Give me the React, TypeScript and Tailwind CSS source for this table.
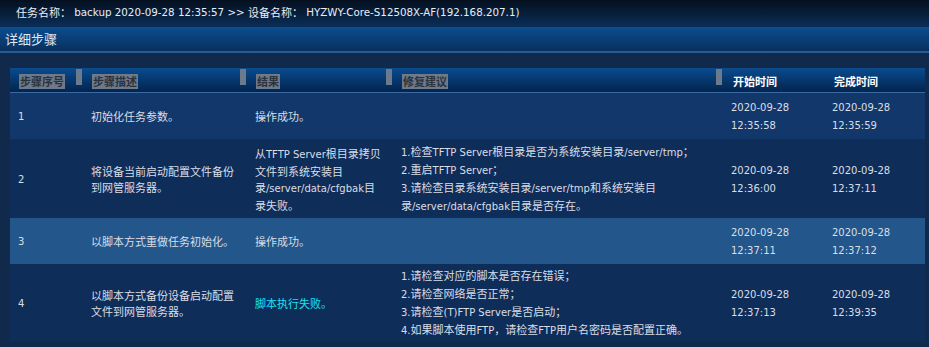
const COLS = 'grid grid-cols-[73px_164px_146px_330px_101px_101px]'

const HEADS = ['步骤序号', '步骤描述', '结果', '修复建议']

type Row = {
  no: string
  desc: string[]
  result: string[]
  fail?: boolean
  advice: string[]
  start: string[]
  end: string[]
  h: string
  bg: string
}

const ROWS: Row[] = [
  {
    no: '1',
    desc: ['初始化任务参数。'],
    result: ['操作成功。'],
    advice: [],
    start: ['2020-09-28', '12:35:58'],
    end: ['2020-09-28', '12:35:59'],
    h: 'h-[46px]',
    bg: 'bg-[#12386b]',
  },
  {
    no: '2',
    desc: ['将设备当前启动配置文件备份', '到网管服务器。'],
    result: ['从TFTP Server根目录拷贝', '文件到系统安装目', '录/server/data/cfgbak目', '录失败。'],
    advice: [
      '1.检查TFTP Server根目录是否为系统安装目录/server/tmp；',
      '2.重启TFTP Server；',
      '3.请检查目录系统安装目录/server/tmp和系统安装目',
      '录/server/data/cfgbak目录是否存在。',
    ],
    start: ['2020-09-28', '12:36:00'],
    end: ['2020-09-28', '12:37:11'],
    h: 'h-[79px]',
    bg: 'bg-[#0f2d59]',
  },
  {
    no: '3',
    desc: ['以脚本方式重做任务初始化。'],
    result: ['操作成功。'],
    advice: [],
    start: ['2020-09-28', '12:37:11'],
    end: ['2020-09-28', '12:37:12'],
    h: 'h-[46px]',
    bg: 'bg-[#23568b]',
  },
  {
    no: '4',
    desc: ['以脚本方式备份设备启动配置', '文件到网管服务器。'],
    result: ['脚本执行失败。'],
    fail: true,
    advice: [
      '1.请检查对应的脚本是否存在错误；',
      '2.请检查网络是否正常；',
      '3.请检查(T)FTP Server是否启动；',
      '4.如果脚本使用FTP，请检查FTP用户名密码是否配置正确。',
    ],
    start: ['2020-09-28', '12:37:13'],
    end: ['2020-09-28', '12:39:35'],
    h: 'h-[77px]',
    bg: 'bg-[#0f2d59]',
  },
]

// latin runs are set a size smaller in a Verdana-like face, the way the old page renders them
function Txt({ s, top }: { s: string; top?: boolean }) {
  const parts = s.split(/([\x20-\x7e]+)/).filter(Boolean)
  return (
    <>
      {parts.map((p, i) =>
        /^[\x20-\x7e]+$/.test(p) ? (
          <span
            key={i}
            className={`font-['DejaVu_Sans',sans-serif] whitespace-pre ${top ? 'text-[10.3px]' : 'text-[10px]'}`}
          >
            {p}
          </span>
        ) : (
          <span key={i}>{p}</span>
        ),
      )}
    </>
  )
}

function Lines({ lines }: { lines: string[] }) {
  return (
    <div className="flex flex-col">
      {lines.map((l, i) => (
        <span key={i} className="whitespace-nowrap"><Txt s={l} /></span>
      ))}
    </div>
  )
}

export default function App() {
  return (
    <div className="w-[929px] h-[347px] overflow-hidden bg-[#11294b] text-[11px] leading-[16px] text-[#dadee5] font-['Noto_Sans_CJK_SC',sans-serif]">
      <div className="h-[27px] flex items-center pl-4 pb-[3px] bg-gradient-to-b from-[#04101f] to-[#0b2e59] text-[#e8eef6] whitespace-nowrap">
        <Txt top s="任务名称： backup 2020-09-28 12:35:57 >> 设备名称： HYZWY-Core-S12508X-AF(192.168.207.1)" />
      </div>
      <div className="h-[26px] flex items-center pl-[5px] bg-gradient-to-b from-[#0b4e90] to-[#08305f] border-b-2 border-[#2b5b93] text-[13px] text-[#dce8f6]">
        详细步骤
      </div>

      <div className="ml-[10px] mt-[15px] w-[915px]">
        <div className={`${COLS} h-[25px] bg-gradient-to-b from-[#0a4c8f] to-[#03244f] border-b border-[#3a6aa1]`}>
          {HEADS.map((t) => (
            <div key={t} className="flex items-start justify-between pr-[1px]">
              <span className="mt-[6px] ml-[9px] px-[1px] leading-[15px] bg-[#6d7a8b] text-[#2b323c] font-bold">{t}</span>
              <span className="mt-[1px] w-[6px] h-[16px] bg-[#6d7a8b]" />
            </div>
          ))}
          <div className="pl-[10px] pt-[6px] leading-[15px] font-bold text-white">开始时间</div>
          <div className="pl-[10px] pt-[6px] leading-[15px] font-bold text-white">完成时间</div>
        </div>

        {ROWS.map((r) => (
          <div key={r.no} className={`${COLS} ${r.h} ${r.bg} items-center`}>
            <div className="pl-2"><Txt s={r.no} /></div>
            <div className="pl-2"><Lines lines={r.desc} /></div>
            <div className={`pl-2 ${r.fail ? 'text-[#14e4f4]' : ''}`}><Lines lines={r.result} /></div>
            <div className="pl-2"><Lines lines={r.advice} /></div>
            <div className="pl-2"><Lines lines={r.start} /></div>
            <div className="pl-2"><Lines lines={r.end} /></div>
          </div>
        ))}
      </div>
    </div>
  )
}
